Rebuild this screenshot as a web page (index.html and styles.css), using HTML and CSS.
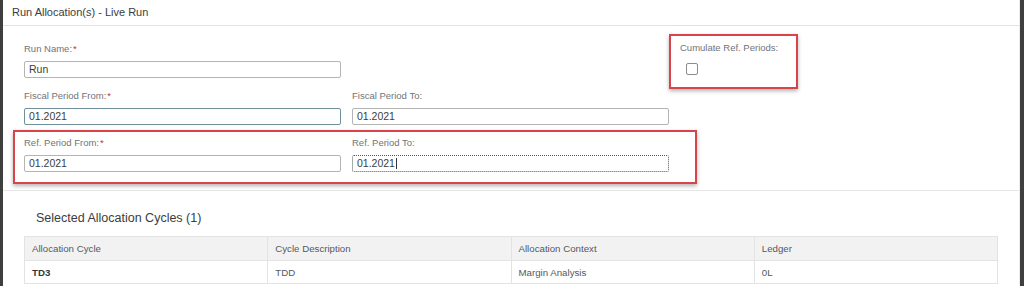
FILE: index.html
```html
<!DOCTYPE html>
<html lang="en">
<head>
  <meta charset="UTF-8">
  <meta name="viewport" content="width=device-width, initial-scale=1">
  <title>Run Allocation(s) - Live Run</title>
  <link rel="stylesheet" href="styles.css">
</head>
<body>

  <div class="dialog">
    <div class="dialog-header">Run Allocation(s) - Live Run</div>

    <div class="form">
      <div class="form-grid">
        <div class="field">
          <label>Run Name:<span class="req">*</span></label>
          <div class="input">Run</div>
        </div>
        <div></div>
        <div class="cumulate marked">
          <label>Cumulate Ref. Periods:</label>
          <span class="checkbox"></span>
        </div>

        <div class="field">
          <label>Fiscal Period From:<span class="req">*</span></label>
          <div class="input focused">01.2021</div>
        </div>
        <div class="field">
          <label>Fiscal Period To:</label>
          <div class="input">01.2021</div>
        </div>
      </div>

      <div class="ref-row marked">
        <div class="field">
          <label>Ref. Period From:<span class="req">*</span></label>
          <div class="input">01.2021</div>
        </div>
        <div class="field">
          <label>Ref. Period To:</label>
          <div class="input dotted">01.2021<span class="caret"></span></div>
        </div>
      </div>
    </div>

    <div class="cycles">
      <div class="cycles-title">Selected Allocation Cycles (1)</div>
      <table class="cycles-table">
        <thead>
          <tr>
            <th>Allocation Cycle</th>
            <th>Cycle Description</th>
            <th>Allocation Context</th>
            <th>Ledger</th>
          </tr>
        </thead>
        <tbody>
          <tr>
            <td class="key">TD3</td>
            <td>TDD</td>
            <td>Margin Analysis</td>
            <td>0L</td>
          </tr>
        </tbody>
      </table>
    </div>
  </div>

</body>
</html>
```

FILE: styles.css
```css
* {
  box-sizing: border-box;
}

body {
  margin: 0;
  background-color: #3f3f3f;
  font-family: "Liberation Sans", Arial, sans-serif;
  color: #32363a;
}

.dialog {
  margin-left: 3px;
  margin-right: 4px;
  height: 286px;
  overflow: hidden;
  background-color: #ffffff;
  border-right: 1px solid #ececec;
}

.dialog-header {
  height: 26px;
  line-height: 25px;
  padding-left: 9px;
  font-size: 11px;
  color: #3a3d40;
  border-bottom: 1px solid #e2e2e2;
}

.form {
  padding: 17px 0 6px 21px;
  border-bottom: 1px solid #e6e6e6;
}

.form-grid {
  display: grid;
  grid-template-columns: 317px 317px auto;
  column-gap: 11px;
  row-gap: 12px;
}

.field {
  display: flex;
  flex-direction: column;
}

.field label,
.cumulate label {
  font-size: 9.5px;
  line-height: 12px;
  color: #70747a;
}

.req {
  color: #c0392b;
  margin-left: 1px;
}

.input {
  margin-top: 6px;
  height: 17px;
  line-height: 15px;
  padding-left: 4px;
  font-size: 10.5px;
  color: #3a3d40;
  border: 1px solid #b4b4b4;
  border-radius: 2px;
  background-color: #ffffff;
}

.input.focused {
  border-color: #6f8f9c;
}

.input.dotted {
  border: 1px dotted #555555;
}

.caret {
  display: inline-block;
  width: 1px;
  height: 11px;
  margin-left: 1px;
  vertical-align: -2px;
  background-color: #32363a;
}

.marked {
  border: 2px solid #d8434c;
  box-shadow: 0 2px 4px rgba(0, 0, 0, 0.3);
}

.cumulate {
  grid-row: span 2;
  align-self: start;
  display: flex;
  flex-direction: column;
  width: 129px;
  margin: -9px 0 0 -11px;
  padding: 6px 0 12px 9px;
}

.checkbox {
  width: 12px;
  height: 12px;
  margin: 9px 0 0 6px;
  border: 1px solid #8c8c8c;
  border-radius: 2px;
}

.ref-row {
  display: grid;
  grid-template-columns: 317px 317px;
  column-gap: 11px;
  width: 684px;
  margin: 5px 0 0 -11px;
  padding: 5px 0 10px 9px;
}

.cycles {
  padding: 19px 0 0 21px;
}

.cycles-title {
  padding-left: 12px;
  font-size: 12.5px;
  line-height: 16px;
  color: #3a3d40;
  margin-bottom: 10px;
}

.cycles-table {
  width: 974px;
  border-collapse: collapse;
  table-layout: fixed;
  font-size: 9.7px;
  color: #55595d;
}

.cycles-table th,
.cycles-table td {
  text-align: left;
  font-weight: normal;
  padding: 0 0 0 7px;
  border: 1px solid #e3e3e3;
}

.cycles-table th {
  height: 24px;
  background-color: #f2f2f2;
}

.cycles-table td {
  height: 23px;
}

.cycles-table td.key {
  font-weight: bold;
  color: #32363a;
}
```
